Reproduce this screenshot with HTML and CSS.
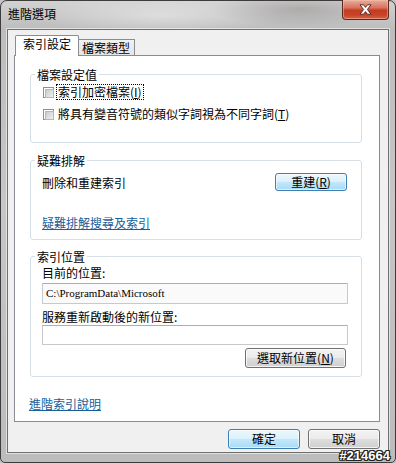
FILE: index.html
```html
<!DOCTYPE html>
<html lang="zh-Hant">
<head>
<meta charset="utf-8">
<title>進階選項</title>
<link rel="stylesheet" href="styles.css">
</head>
<body>
<div class="window">
  <div class="titlebar">
    <span class="title">進階選項</span>
    <span class="close">
      <svg width="13" height="11" viewBox="0 0 13 11"><polygon points="1,0.8 4.6,0.8 6.5,3.4 8.4,0.8 12,0.8 8.4,5.5 12,10.2 8.4,10.2 6.5,7.6 4.6,10.2 1,10.2 4.6,5.5" fill="#fff" stroke="#4a2018" stroke-width="0.9" stroke-linejoin="round"/></svg>
    </span>
  </div>
  <div class="client">
    <div class="tabs">
      <span class="tab active">索引設定</span>
      <span class="tab">檔案類型</span>
    </div>
    <div class="panel">
      <fieldset class="group g1">
        <legend>檔案設定值</legend>
        <label class="check"><span class="box"></span><span class="ctext focus">索引加密檔案(<u>I</u>)</span></label>
        <label class="check second"><span class="box"></span><span class="ctext">將具有變音符號的類似字詞視為不同字詞(<u>T</u>)</span></label>
      </fieldset>
      <fieldset class="group g2">
        <legend>疑難排解</legend>
        <div class="row">
          <span>刪除和重建索引</span>
          <button class="btn default rebuild">重建(<u>R</u>)</button>
        </div>
        <a class="link trouble" href="#">疑難排解搜尋及索引</a>
      </fieldset>
      <fieldset class="group g3">
        <legend>索引位置</legend>
        <div class="label">目前的位置:</div>
        <div class="field current">C:\ProgramData\Microsoft</div>
        <div class="label second">服務重新啟動後的新位置:</div>
        <div class="field empty"></div>
        <div class="pick-row"><button class="btn pick">選取新位置(<u>N</u>)</button></div>
      </fieldset>
      <a class="link help" href="#">進階索引說明</a>
    </div>
    <div class="actions">
      <button class="btn default">確定</button>
      <button class="btn">取消</button>
    </div>
  </div>
  <span class="watermark">#214664</span>
</div>
</body>
</html>
```
FILE: styles.css
```css
* { box-sizing: border-box; }
html, body { margin: 0; padding: 0; }
body {
  width: 396px;
  height: 463px;
  overflow: hidden;
  background: #c4c4c4;
  font-family: "Noto Sans CJK TC", "Noto Sans", sans-serif;
  font-size: 12px;
  color: #000;
}

.window {
  position: relative;
  width: 396px;
  height: 463px;
  border: 1px solid #3c3c3c;
  border-radius: 7px 7px 5px 5px;
  padding: 0 6px;
  display: flex;
  flex-direction: column;
  background:
    radial-gradient(ellipse 90px 18px at 300px 8px, rgba(120,110,110,0.35), rgba(120,110,110,0) 100%),
    radial-gradient(ellipse 120px 20px at 160px 14px, rgba(235,235,235,0.6), rgba(235,235,235,0) 100%),
    linear-gradient(to bottom, #d2d2d2 0, #bdbdbd 28px, #c6c6c6 200px, #bcbcbc 100%);
}

.titlebar {
  height: 28px;
  display: flex;
  align-items: flex-start;
}
.title {
  margin: 6px 0 0 1px;
  line-height: 14px;
  font-size: 12px;
  color: #000;
}
.close {
  margin-left: auto;
  margin-top: -1px;
  width: 47px;
  height: 20px;
  border: 1px solid #5b2a1f;
  border-top: none;
  border-radius: 0 0 4px 4px;
  background: linear-gradient(to bottom, #e7ae9f 0, #d9735e 40%, #c53b21 55%, #c94428 80%, #d6684c 100%);
  box-shadow: inset 0 0 0 1px rgba(255,200,180,0.45);
  display: flex;
  align-items: center;
  justify-content: center;
}

.client {
  height: 424px;
  border: 1px solid #6f6f6f;
  background: #f0f0f0;
  padding: 5px 8px 3px 6px;
  display: flex;
  flex-direction: column;
  box-shadow: 0 0 0 1px rgba(255,255,255,0.55);
}

.tabs {
  height: 20px;
  display: flex;
  align-items: flex-end;
  position: relative;
  z-index: 1;
}
.tab {
  height: 16px;
  border: 1px solid #898c95;
  border-bottom: none;
  border-left: none;
  padding: 1px 4px 0 3px;
  line-height: 14px;
  background: linear-gradient(to bottom, #f2f2f2, #e4e4e4);
  white-space: nowrap;
}
.tab.active {
  height: 21px;
  margin-bottom: -1px;
  margin-left: 1px;
  border-left: 1px solid #898c95;
  padding: 1px 7px 0 7px;
  background: #fff;
  border-radius: 2px 2px 0 0;
}

.panel {
  height: 367px;
  border: 1px solid #898c95;
  background: #fff;
  display: flex;
  flex-direction: column;
  align-items: flex-start;
}

.group {
  align-self: stretch;
  margin: 0 17px 0 15px;
  border: 1px solid #d5dfe5;
  border-radius: 3px;
  padding: 0 14px 0 11px;
  min-width: 0;
}
.group legend {
  padding: 0 2px;
  margin-left: -7px;
  line-height: 13px;
  color: #000;
}

.g1 { margin-top: 12px; padding-top: 3px; padding-bottom: 20px; }
.g2 { margin-top: 11px; padding-top: 6px; padding-bottom: 8px; }
.g3 { margin-top: 10px; padding-top: 2px; padding-bottom: 8px; }

.check {
  display: flex;
  align-items: center;
  height: 16px;
  line-height: 16px;
  white-space: nowrap;
}
.check.second { margin-top: 6px; }
.box {
  width: 11px;
  height: 11px;
  margin-left: 1px;
  margin-right: 3px;
  border: 1px solid #8e8f8f;
  background: #fff;
  padding: 1px;
  flex: none;
}
.box::before {
  content: "";
  display: block;
  width: 7px;
  height: 7px;
  border: 1px solid #b4b8bd;
  background: linear-gradient(135deg, #c9cbce, #eef0f2);
}
.ctext { padding: 0 1px; line-height: 14px; }
.focus { outline: 1px dotted #000; outline-offset: 0; }

.row {
  display: flex;
  align-items: center;
  justify-content: space-between;
  height: 18px;
}

.btn {
  font-family: "Noto Sans CJK TC", "Noto Sans", sans-serif;
  font-size: 12px;
  color: #000;
  height: 20px;
  padding: 0;
  line-height: 16px;
  border: 1px solid #707070;
  border-radius: 3px;
  background: linear-gradient(to bottom, #f3f3f3 0, #ebebeb 48%, #dddddd 52%, #cfcfcf 100%);
  box-shadow: inset 0 0 0 1px rgba(255,255,255,0.75);
}
.btn.default {
  border-color: #3c7fb1;
  background: linear-gradient(to bottom, #ecf7fd 0, #dcf1fc 48%, #c2e7fc 52%, #a9daf5 100%);
  box-shadow: inset 0 0 0 1px rgba(255,255,255,0.6);
}
.btn u, .ctext u { text-decoration: underline; }
.rebuild { width: 72px; height: 18px; line-height: 14px; }

.link {
  color: #14609a;
  text-decoration: underline;
  line-height: 16px;
  white-space: nowrap;
}
.trouble { display: inline-block; margin-top: 24px; }
.help { margin: 19px 0 0 14px; }

.label { line-height: 16px; }
.label.second { margin-top: 5px; }
.field {
  height: 21px;
  margin-top: 2px;
  margin-right: -1px;
  border: 1px solid #c6c9cd;
  border-top-color: #abafb4;
  border-radius: 1px;
  padding: 0 3px;
  font-family: "Liberation Serif", serif;
  font-size: 11px;
  line-height: 19px;
}
.field.current { background: #fafafa; }
.field.empty { height: 20px; margin-top: 0; background: #fff; }
.pick-row {
  display: flex;
  justify-content: flex-end;
  margin-top: 3px;
}
.pick { width: 101px; margin-right: 1px; }

.actions {
  display: flex;
  justify-content: flex-end;
  gap: 8px;
  margin-top: 7px;
}
.actions .btn { width: 72px; }

.watermark {
  position: absolute;
  right: 5px;
  bottom: -1px;
  font-family: "Liberation Sans", sans-serif;
  font-weight: bold;
  font-size: 13px;
  line-height: 14px;
  color: #fff;
  text-shadow: 1px 0 0 #222, -1px 0 0 #222, 0 1px 0 #222, 0 -1px 0 #222, 1px 1px 0 #222, -1px -1px 0 #222, 1px -1px 0 #222, -1px 1px 0 #222;
}
```
